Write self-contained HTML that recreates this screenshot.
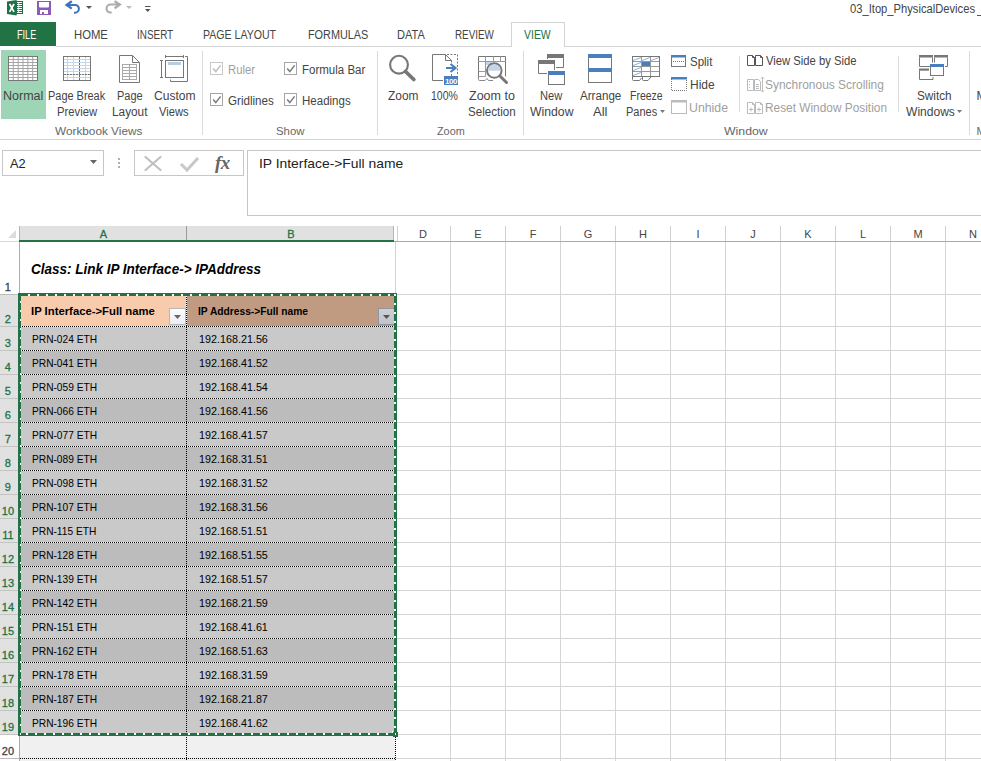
<!DOCTYPE html><html><head><meta charset="utf-8"><style>
*{margin:0;padding:0;box-sizing:border-box}
html,body{width:981px;height:761px;overflow:hidden;background:#fff}
body{position:relative;font-family:"Liberation Sans",sans-serif}
.a{position:absolute}
.t{position:absolute;white-space:nowrap;line-height:1}
svg{position:absolute;overflow:visible}
</style></head><body>
<svg style="left:7px;top:0px" width="17" height="17" viewBox="0 0 17 17">
<rect x="9.5" y="1.5" width="6" height="12" fill="#fff" stroke="#1f7246"/>
<path d="M10 3.5H15M10 5.5H15M10 7.5H15M10 9.5H15M10 11.5H15" stroke="#1f7246" stroke-width="1"/>
<path d="M11.7 2V13" stroke="#fff" stroke-width="0.8"/>
<path d="M0 1.5 L9.7 0 L9.7 15.5 L0 14 Z" fill="#1f7246"/>
<path d="M2.6 4 L7 11.8 M7 4 L2.6 11.8" stroke="#fff" stroke-width="1.7"/>
</svg>
<svg style="left:37px;top:1px" width="14" height="14" viewBox="0 0 14 14">
<rect x="0" y="0" width="14" height="14" fill="#8c5bb5"/>
<path d="M2 1H12V5.5Q12 6.6 11 6.6H3Q2 6.6 2 5.5Z" fill="#fff"/>
<rect x="3" y="9" width="8" height="4" fill="#fff"/>
<rect x="5" y="11" width="2" height="2" fill="#8c5bb5"/>
</svg>
<svg style="left:65px;top:0px" width="16" height="15" viewBox="0 0 16 15">
<path d="M6.8 1.2L1.6 4.9L6.8 8.6" fill="none" stroke="#3d74b8" stroke-width="2.3"/>
<path d="M2 4.9H10A3.9 3.9 0 0 1 10 12.7H9" fill="none" stroke="#3d74b8" stroke-width="2"/>
</svg>
<svg style="left:86px;top:6px" width="6" height="4" viewBox="0 0 6 4"><path d="M0 0H6L3 3Z" fill="#555"/></svg>
<svg style="left:105px;top:0px" width="16" height="15" viewBox="0 0 16 15">
<path d="M9.6 1.2L14.8 4.6L9.6 8.3" fill="none" stroke="#ababab" stroke-width="2.3"/>
<path d="M14.4 4.6H5.5A4 4 0 0 0 5.5 12.6H6.7" fill="none" stroke="#ababab" stroke-width="2"/>
</svg>
<svg style="left:126px;top:6px" width="6" height="4" viewBox="0 0 6 4"><path d="M0 0H6L3 3Z" fill="#bbb"/></svg>
<svg style="left:145px;top:5px" width="6" height="8" viewBox="0 0 6 8"><path d="M0 1.5H5.5" stroke="#555" stroke-width="1"/><path d="M0 4H5.5L2.75 7Z" fill="#555"/></svg>
<div class="t" style="left:850.00px;top:3.02px;font-size:12.5px;color:#444;transform:scaleX(0.8950);transform-origin:left 0;">03_Itop_PhysicalDevices</div>
<div class="a" style="left:977px;top:15px;width:4px;height:1px;background:#555"></div>
<div class="a" style="left:0px;top:22px;width:56px;height:24px;background:#217346"></div>
<div class="t" style="left:16.60px;top:28.84px;font-size:12px;color:#fff;transform:scaleX(0.7571);transform-origin:left 0;">FILE</div>
<div class="a" style="left:56px;top:46px;width:925px;height:1px;background:#d4d4d4"></div>
<div class="a" style="left:511px;top:22px;width:54px;height:25px;background:#fff;border:1px solid #d4d4d4;border-bottom:none"></div>
<div class="t" style="left:73.80px;top:28.84px;font-size:12px;color:#444;transform:scaleX(0.9420);transform-origin:left 0;">HOME</div>
<div class="t" style="left:137.00px;top:28.84px;font-size:12px;color:#444;transform:scaleX(0.8257);transform-origin:left 0;">INSERT</div>
<div class="t" style="left:203.40px;top:28.84px;font-size:12px;color:#444;transform:scaleX(0.8810);transform-origin:left 0;">PAGE LAYOUT</div>
<div class="t" style="left:307.80px;top:28.84px;font-size:12px;color:#444;transform:scaleX(0.9034);transform-origin:left 0;">FORMULAS</div>
<div class="t" style="left:397.00px;top:28.84px;font-size:12px;color:#444;transform:scaleX(0.9208);transform-origin:left 0;">DATA</div>
<div class="t" style="left:455.00px;top:28.84px;font-size:12px;color:#444;transform:scaleX(0.8193);transform-origin:left 0;">REVIEW</div>
<div class="t" style="left:524.00px;top:28.84px;font-size:12px;color:#217346;transform:scaleX(0.8710);transform-origin:left 0;">VIEW</div>
<div class="a" style="left:0px;top:139px;width:981px;height:1px;background:#d4d4d4"></div>
<div class="a" style="left:202px;top:51px;width:1px;height:84px;background:#dadada"></div>
<div class="a" style="left:377px;top:51px;width:1px;height:84px;background:#dadada"></div>
<div class="a" style="left:523px;top:51px;width:1px;height:84px;background:#dadada"></div>
<div class="a" style="left:969px;top:51px;width:1px;height:84px;background:#dadada"></div>
<div class="a" style="left:739px;top:56px;width:1px;height:56px;background:#dadada"></div>
<div class="a" style="left:898px;top:56px;width:1px;height:56px;background:#dadada"></div>
<div class="a" style="left:1px;top:50px;width:45px;height:69px;background:#9fd5b7"></div>
<div class="t" style="left:55.00px;top:125.69px;font-size:11px;color:#666;transform:scaleX(1.0715);transform-origin:left 0;">Workbook Views</div>
<div class="t" style="left:275.80px;top:125.69px;font-size:11px;color:#666;transform:scaleX(1.0343);transform-origin:left 0;">Show</div>
<div class="t" style="left:436.60px;top:125.69px;font-size:11px;color:#666;transform:scaleX(0.9853);transform-origin:left 0;">Zoom</div>
<div class="t" style="left:724.00px;top:125.69px;font-size:11px;color:#666;transform:scaleX(1.1163);transform-origin:left 0;">Window</div>
<div class="t" style="left:3.40px;top:89.54px;font-size:12px;color:#444;transform:scaleX(1.0434);transform-origin:left 0;">Normal</div>
<div class="t" style="left:48.00px;top:89.54px;font-size:12px;color:#444;transform:scaleX(0.9118);transform-origin:left 0;">Page Break</div>
<div class="t" style="left:57.20px;top:105.94px;font-size:12px;color:#444;transform:scaleX(0.9378);transform-origin:left 0;">Preview</div>
<div class="t" style="left:117.00px;top:89.54px;font-size:12px;color:#444;transform:scaleX(0.9147);transform-origin:left 0;">Page</div>
<div class="t" style="left:112.20px;top:105.94px;font-size:12px;color:#444;transform:scaleX(0.9843);transform-origin:left 0;">Layout</div>
<div class="t" style="left:153.80px;top:89.54px;font-size:12px;color:#444;transform:scaleX(1.0059);transform-origin:left 0;">Custom</div>
<div class="t" style="left:159.20px;top:105.94px;font-size:12px;color:#444;transform:scaleX(0.9292);transform-origin:left 0;">Views</div>
<div class="t" style="left:387.60px;top:89.54px;font-size:12px;color:#444;transform:scaleX(0.9914);transform-origin:left 0;">Zoom</div>
<div class="t" style="left:431.00px;top:89.54px;font-size:12px;color:#444;transform:scaleX(0.8752);transform-origin:left 0;">100%</div>
<div class="t" style="left:469.00px;top:89.54px;font-size:12px;color:#444;transform:scaleX(1.0413);transform-origin:left 0;">Zoom to</div>
<div class="t" style="left:468.00px;top:105.94px;font-size:12px;color:#444;transform:scaleX(0.9658);transform-origin:left 0;">Selection</div>
<div class="t" style="left:540.20px;top:89.54px;font-size:12px;color:#444;transform:scaleX(0.9232);transform-origin:left 0;">New</div>
<div class="t" style="left:530.00px;top:105.94px;font-size:12px;color:#444;transform:scaleX(1.0190);transform-origin:left 0;">Window</div>
<div class="t" style="left:579.80px;top:89.54px;font-size:12px;color:#444;transform:scaleX(0.9681);transform-origin:left 0;">Arrange</div>
<div class="t" style="left:592.80px;top:105.94px;font-size:12px;color:#444;transform:scaleX(1.0870);transform-origin:left 0;">All</div>
<div class="t" style="left:629.80px;top:89.54px;font-size:12px;color:#444;transform:scaleX(0.8738);transform-origin:left 0;">Freeze</div>
<div class="t" style="left:626.00px;top:105.94px;font-size:12px;color:#444;transform:scaleX(0.9152);transform-origin:left 0;">Panes</div>
<div class="t" style="left:916.60px;top:89.54px;font-size:12px;color:#444;transform:scaleX(0.9809);transform-origin:left 0;">Switch</div>
<div class="t" style="left:905.60px;top:105.94px;font-size:12px;color:#444;transform:scaleX(1.0044);transform-origin:left 0;">Windows</div>
<div class="t" style="left:690.00px;top:55.84px;font-size:12px;color:#444;transform:scaleX(0.9583);transform-origin:left 0;">Split</div>
<div class="t" style="left:690.00px;top:78.84px;font-size:12px;color:#444;">Hide</div>
<div class="t" style="left:689.00px;top:101.84px;font-size:12px;color:#a0a0a0;transform:scaleX(1.0270);transform-origin:left 0;">Unhide</div>
<div class="t" style="left:765.60px;top:55.34px;font-size:12px;color:#444;transform:scaleX(0.9372);transform-origin:left 0;">View Side by Side</div>
<div class="t" style="left:765.00px;top:78.84px;font-size:12px;color:#a0a0a0;transform:scaleX(0.9959);transform-origin:left 0;">Synchronous Scrolling</div>
<div class="t" style="left:765.00px;top:101.84px;font-size:12px;color:#a0a0a0;transform:scaleX(0.9886);transform-origin:left 0;">Reset Window Position</div>
<div class="t" style="left:976.50px;top:89.54px;font-size:12px;color:#444;">M</div>
<div class="t" style="left:976.50px;top:125.69px;font-size:11px;color:#666;">M</div>
<svg style="left:210px;top:62px" width="13" height="13" viewBox="0 0 13 13"><rect x="0.5" y="0.5" width="12" height="12" fill="#fff" stroke="#c8c8c8"/><path d="M3.2 6.6 L5.8 9.6 L10.6 3.4" fill="none" stroke="#bdbdbd" stroke-width="1.5"/></svg>
<svg style="left:284px;top:62px" width="13" height="13" viewBox="0 0 13 13"><rect x="0.5" y="0.5" width="12" height="12" fill="#fff" stroke="#a6a6a6"/><path d="M3.2 6.6 L5.8 9.6 L10.6 3.4" fill="none" stroke="#7a7a7a" stroke-width="1.5"/></svg>
<svg style="left:210px;top:93px" width="13" height="13" viewBox="0 0 13 13"><rect x="0.5" y="0.5" width="12" height="12" fill="#fff" stroke="#a6a6a6"/><path d="M3.2 6.6 L5.8 9.6 L10.6 3.4" fill="none" stroke="#7a7a7a" stroke-width="1.5"/></svg>
<svg style="left:284px;top:93px" width="13" height="13" viewBox="0 0 13 13"><rect x="0.5" y="0.5" width="12" height="12" fill="#fff" stroke="#a6a6a6"/><path d="M3.2 6.6 L5.8 9.6 L10.6 3.4" fill="none" stroke="#7a7a7a" stroke-width="1.5"/></svg>
<div class="t" style="left:227.60px;top:63.54px;font-size:12px;color:#a0a0a0;transform:scaleX(0.9407);transform-origin:left 0;">Ruler</div>
<div class="t" style="left:302.00px;top:63.54px;font-size:12px;color:#444;transform:scaleX(0.9593);transform-origin:left 0;">Formula Bar</div>
<div class="t" style="left:228.00px;top:94.54px;font-size:12px;color:#444;transform:scaleX(0.9665);transform-origin:left 0;">Gridlines</div>
<div class="t" style="left:302.00px;top:94.54px;font-size:12px;color:#444;transform:scaleX(0.9604);transform-origin:left 0;">Headings</div>
<svg style="left:8px;top:56px" width="30" height="25" viewBox="0 0 30 25"><rect x="0.5" y="0.5" width="29" height="24" fill="#fff" stroke="#777"/><path d="M1 3.5H29" stroke="#a6a6a6"/><path d="M1 6.5H29" stroke="#a6a6a6"/><path d="M1 9.5H29" stroke="#a6a6a6"/><path d="M1 12.5H29" stroke="#a6a6a6"/><path d="M1 15.5H29" stroke="#a6a6a6"/><path d="M1 18.5H29" stroke="#a6a6a6"/><path d="M1 21.5H29" stroke="#a6a6a6"/><path d="M5.3 1V24" stroke="#a6a6a6"/><path d="M10.2 1V24" stroke="#a6a6a6"/><path d="M15.0 1V24" stroke="#a6a6a6"/><path d="M19.8 1V24" stroke="#a6a6a6"/><path d="M24.7 1V24" stroke="#a6a6a6"/></svg>
<svg style="left:63px;top:56px" width="28" height="25" viewBox="0 0 28 25"><rect x="0.5" y="0.5" width="27" height="24" fill="#fff" stroke="#777"/><path d="M1 3.5H27" stroke="#c5d5ea"/><path d="M1 6.5H27" stroke="#c5d5ea"/><path d="M1 9.5H27" stroke="#c5d5ea"/><path d="M1 12.5H27" stroke="#c5d5ea"/><path d="M1 15.5H27" stroke="#c5d5ea"/><path d="M1 18.5H27" stroke="#c5d5ea"/><path d="M1 21.5H27" stroke="#c5d5ea"/><path d="M4.5 1V24" stroke="#c5d5ea"/><path d="M10.5 1V24" stroke="#c5d5ea"/><path d="M22.5 1V24" stroke="#c5d5ea"/><path d="M16.5 1V24" stroke="#666" stroke-dasharray="2,1"/><path d="M1 18.5H27" stroke="#777" stroke-dasharray="2,1"/></svg>
<svg style="left:119px;top:55px" width="22" height="29" viewBox="0 0 22 29">
<path d="M0.5 27.5V0.5H13.5L20.5 7.5V27.5Z" fill="#fff" stroke="#777"/>
<path d="M13.5 0.5V7.5H20.5" fill="none" stroke="#777"/>
<rect x="3.5" y="9.5" width="14" height="15" fill="#fff" stroke="#aaa"/>
<path d="M3.5 12.5H17.5M3.5 15.5H17.5M3.5 18.5H17.5M3.5 21.5H17.5M10.5 9.5V24.5" stroke="#aaa"/>
</svg>
<svg style="left:159px;top:54px" width="30" height="29" viewBox="0 0 30 29">
<path d="M2.5 6.5V23.5M1 6.5H4M1 23.5H4" fill="none" stroke="#777"/>
<path d="M6.5 2.5H24.5M6.5 1V4M24.5 1V4" fill="none" stroke="#777"/>
<rect x="6.5" y="6.5" width="18" height="17" fill="#fff" stroke="#777"/>
<rect x="9" y="8" width="13" height="3" fill="#b7cce6"/>
<path d="M26 2.5H28.5V27.5H11.5V25.5" fill="none" stroke="#777"/>
</svg>
<svg style="left:388px;top:54px" width="30" height="30" viewBox="0 0 30 30">
<circle cx="11" cy="10.7" r="8.9" fill="none" stroke="#777" stroke-width="2.1"/>
<path d="M17.5 17.5 L25.8 25.5" stroke="#777" stroke-width="3.8" stroke-linecap="round"/>
</svg>
<svg style="left:432px;top:54px" width="27" height="31" viewBox="0 0 27 31">
<path d="M11 26.5H0.5V0.5H13.5L19.5 6.5V8.5" fill="none" stroke="#777"/>
<path d="M13.5 0.5V6.5H19.5" fill="none" stroke="#777"/>
<path d="M15 0.5H25.5V20.5" fill="none" stroke="#777" stroke-dasharray="2,1.5"/>
<path d="M19.5 20V22" stroke="#777"/>
<path d="M14 14H23" stroke="#4a7fbd" stroke-width="2"/>
<path d="M18.5 10L23.5 14L18.5 18" fill="none" stroke="#4a7fbd" stroke-width="2.2"/>
<rect x="12" y="22" width="14" height="9" fill="#4a7fbd"/>
<text x="19" y="29.5" font-family="Liberation Sans" font-size="8" font-weight="bold" fill="#fff" text-anchor="middle" letter-spacing="-0.5">100</text>
</svg>
<svg style="left:477px;top:56px" width="32" height="29" viewBox="0 0 32 29">
<path d="M1.5 20.5V0.5H28.5V20.5" fill="#fff" stroke="#777"/>
<path d="M1.5 5.5H28.5M8.5 0.5V20.5M16.5 0.5V5.5M23.5 0.5V5.5M1.5 15.5H8.5M1.5 20.5H8.5" fill="none" stroke="#9a9a9a"/>
<path d="M1.5 20.5V23.5Q1.5 24.5 2.5 24.5H8L10 22.5L11.5 24.5H16" fill="none" stroke="#888"/>
<rect x="9" y="6" width="5" height="3" fill="#c3d5ea"/>
<circle cx="17.3" cy="14.5" r="7.3" fill="#fff" stroke="#777" stroke-width="2"/>
<path d="M11 14.8 A6.3 6.3 0 0 1 23.6 14.8Z" fill="#c3d5ea"/>
<path d="M23.2 20.2L29.5 26.5" stroke="#777" stroke-width="3" stroke-linecap="round"/>
</svg>
<svg style="left:538px;top:54px" width="28" height="32" viewBox="0 0 28 32">
<rect x="9" y="0" width="17" height="4" fill="#777"/>
<path d="M9.5 4V5M25.5 4V13.5H18" fill="none" stroke="#777"/>
<rect x="0" y="6" width="17" height="4" fill="#777"/>
<path d="M0.5 10V19.5H9M16.5 10V16" fill="none" stroke="#777"/>
<rect x="10.5" y="17.5" width="16" height="13" fill="#fff" stroke="#777"/>
<rect x="10" y="17" width="17" height="4" fill="#4a7fbd"/>
</svg>
<svg style="left:588px;top:54px" width="24" height="30" viewBox="0 0 24 30">
<rect x="0.5" y="0.5" width="23" height="28" fill="#fff" stroke="#777"/>
<rect x="0" y="0" width="24" height="4" fill="#4a7fbd"/>
<rect x="0" y="14" width="24" height="4" fill="#4a7fbd"/>
</svg>
<svg style="left:632px;top:56px" width="29" height="26" viewBox="0 0 29 26">
<rect x="0.5" y="0.5" width="27" height="20" fill="#fff" stroke="#777"/>
<path d="M1 5.5H27M1 10.5H27M1 15.5H27M9.5 1V20M18.5 1V20" stroke="#999"/>
<path d="M1 4.5L9 1.5M10 4.5L18 1.5M19 4.5L27 1.5M1 9.5L9 6.5M1 14.5L9 11.5M1 19.5L9 16.5" stroke="#8db0dc"/>
<rect x="10" y="6" width="8" height="4" fill="#4a7fbd"/>
<path d="M0.5 20.5V23.5Q0.5 24.5 1.5 24.5H7.5L9.5 22M10.5 21V23.5Q10.5 24.5 11.5 24.5H16L19 21" fill="none" stroke="#777"/>
</svg>
<svg style="left:671px;top:55px" width="15" height="12" viewBox="0 0 15 12">
<rect x="0.5" y="0.5" width="14" height="11" fill="#fff" stroke="#777"/>
<rect x="0" y="0" width="15" height="2.5" fill="#4a7fbd"/>
<path d="M2 6.5H13" stroke="#4a7fbd" stroke-dasharray="1,1"/>
</svg>
<svg style="left:671px;top:77px" width="16" height="14" viewBox="0 0 16 14">
<path d="M0.5 2V13.5H15.5V2" fill="#fff" stroke="#777" stroke-dasharray="1,1"/>
<rect x="0" y="0" width="16" height="2.5" fill="#4a7fbd"/>
</svg>
<svg style="left:671px;top:100px" width="16" height="14" viewBox="0 0 16 14">
<rect x="0.5" y="0.5" width="15" height="13" fill="#fff" stroke="#bbb"/>
<rect x="0" y="0" width="16" height="2.5" fill="#bbb"/>
</svg>
<svg style="left:747px;top:55px" width="17" height="12" viewBox="0 0 17 12">
<path d="M0.5 10.5V0.5H5.5L7.5 2.5V10.5ZM8.5 10.5V0.5H13.5L15.5 2.5V10.5Z" fill="#fff" stroke="#555"/>
<path d="M5.5 0.5V2.5H7.5M13.5 0.5V2.5H15.5" fill="none" stroke="#555"/>
</svg>
<svg style="left:747px;top:76px" width="17" height="17" viewBox="0 0 17 17">
<path d="M0.5 3.5H6.5V14.5H0.5Z" fill="#fff" stroke="#bbb"/>
<path d="M2.5 5V6M2.5 8V9M2.5 11V12" stroke="#bbb"/>
<path d="M7.5 14.5V3.5H11.5L13.5 5.5V14.5Z" fill="#fff" stroke="#bbb"/>
<path d="M9 8.5H12M9 10.5H12M9 12.5H12" stroke="#bbb"/>
<path d="M15.5 1V16M14 2.5L15.5 1L17 2.5M14 14.5L15.5 16L17 14.5" fill="none" stroke="#bbb"/>
</svg>
<svg style="left:747px;top:102px" width="17" height="12" viewBox="0 0 17 12">
<path d="M0.5 11.5V0.5H5.5L7.5 2.5V11.5ZM8.5 11.5V0.5H13.5L15.5 2.5V11.5Z" fill="#fff" stroke="#bbb"/>
<path d="M5.5 0.5V2.5H7.5M13.5 0.5V2.5H15.5" fill="none" stroke="#bbb"/>
<path d="M2 7.5H6M4 5.5V9.5M10 7.5H14M12 5.5V9.5" stroke="#bbb"/>
</svg>
<svg style="left:919px;top:55px" width="30" height="26" viewBox="0 0 30 26">
<rect x="0" y="0" width="14" height="2.5" fill="#777"/>
<rect x="15" y="0" width="14" height="2.5" fill="#777"/>
<rect x="0" y="13.5" width="10" height="2.2" fill="#777"/>
<path d="M0.5 2.5V11.5H11M13.5 2.5V7.5M15.5 2.5V7.5M28.5 2.5V11.5H26M0.5 15.5V24.5H14V22" fill="none" stroke="#777"/>
<rect x="11.5" y="9.5" width="13" height="11" fill="#fff" stroke="#777"/>
<rect x="11" y="9" width="14" height="3" fill="#4a7fbd"/>
</svg>
<svg style="left:660px;top:110px" width="5" height="3" viewBox="0 0 5 3"><path d="M0 0H5L2.5 3Z" fill="#777"/></svg>
<svg style="left:957px;top:110px" width="5" height="3" viewBox="0 0 5 3"><path d="M0 0H5L2.5 3Z" fill="#777"/></svg>
<div class="a" style="left:2px;top:150px;width:102px;height:26px;border:1px solid #c6c6c6;background:#fff"></div>
<div class="t" style="left:9.60px;top:157.00px;font-size:13px;color:#222;transform:scaleX(0.9855);transform-origin:left 0;">A2</div>
<svg style="left:90px;top:160px" width="7" height="4" viewBox="0 0 7 4"><path d="M0 0H7L3.5 4Z" fill="#666"/></svg>
<div class="a" style="left:118px;top:158px;width:2px;height:2px;background:#b0b0b0"></div>
<div class="a" style="left:118px;top:162px;width:2px;height:2px;background:#b0b0b0"></div>
<div class="a" style="left:118px;top:166px;width:2px;height:2px;background:#b0b0b0"></div>
<div class="a" style="left:134px;top:150px;width:110px;height:26px;border:1px solid #c6c6c6;background:#fff"></div>
<svg style="left:144px;top:156px" width="18" height="15" viewBox="0 0 18 15">
<path d="M1.5 1L16.5 14M16.5 1L1.5 14" stroke="#c0c0c0" stroke-width="2.2" stroke-linecap="round"/></svg>
<svg style="left:180px;top:156px" width="19" height="15" viewBox="0 0 19 15">
<path d="M1 8L7 14L18 2" fill="none" stroke="#c8c8c8" stroke-width="3"/></svg>
<div class="t" style="left:215.00px;top:152.92px;font-size:19px;color:#666;font-family:'Liberation Serif',serif;font-style:italic;font-weight:bold;letter-spacing:-0.5px;">fx</div>
<div class="a" style="left:247px;top:150px;width:740px;height:66px;border:1px solid #c6c6c6;background:#fff"></div>
<div class="t" style="left:258.60px;top:156.80px;font-size:13px;color:#222;transform:scaleX(1.0664);transform-origin:left 0;">IP Interface-&gt;Full name</div>
<div class="a" style="left:0px;top:226px;width:981px;height:16px;background:#fff"></div>
<svg style="left:8px;top:230px" width="8" height="8" viewBox="0 0 8 8"><path d="M8 0V8H0Z" fill="#dcdcdc"/></svg>
<div class="a" style="left:0px;top:241px;width:19px;height:1px;background:#dadada"></div>
<div class="a" style="left:19px;top:226px;width:375px;height:14px;background:#e1e1e1"></div>
<div class="a" style="left:19px;top:240px;width:375px;height:2px;background:#217346"></div>
<div class="a" style="left:186px;top:226px;width:1px;height:14px;background:#9a9a9a"></div>
<div class="a" style="left:19px;top:226px;width:1px;height:14px;background:#b4b4b4"></div>
<div class="a" style="left:393px;top:226px;width:1px;height:14px;background:#b5b5b5"></div>
<div class="a" style="left:397px;top:226px;width:1px;height:15px;background:#d0d0d0"></div>
<div class="a" style="left:394px;top:241px;width:587px;height:1px;background:#ababab"></div>
<div class="t" style="left:-46.5px;width:300px;text-align:center;top:228.69px;font-size:11px;color:#217346;-webkit-text-stroke:0.3px;">A</div>
<div class="t" style="left:141px;width:300px;text-align:center;top:228.69px;font-size:11px;color:#217346;-webkit-text-stroke:0.3px;">B</div>
<div class="t" style="left:273px;width:300px;text-align:center;top:228.69px;font-size:11px;color:#444;">D</div>
<div class="a" style="left:450px;top:226px;width:1px;height:15px;background:#d0d0d0"></div>
<div class="t" style="left:328px;width:300px;text-align:center;top:228.69px;font-size:11px;color:#444;">E</div>
<div class="a" style="left:505px;top:226px;width:1px;height:15px;background:#d0d0d0"></div>
<div class="t" style="left:383px;width:300px;text-align:center;top:228.69px;font-size:11px;color:#444;">F</div>
<div class="a" style="left:560px;top:226px;width:1px;height:15px;background:#d0d0d0"></div>
<div class="t" style="left:438px;width:300px;text-align:center;top:228.69px;font-size:11px;color:#444;">G</div>
<div class="a" style="left:615px;top:226px;width:1px;height:15px;background:#d0d0d0"></div>
<div class="t" style="left:493px;width:300px;text-align:center;top:228.69px;font-size:11px;color:#444;">H</div>
<div class="a" style="left:670px;top:226px;width:1px;height:15px;background:#d0d0d0"></div>
<div class="t" style="left:548px;width:300px;text-align:center;top:228.69px;font-size:11px;color:#444;">I</div>
<div class="a" style="left:725px;top:226px;width:1px;height:15px;background:#d0d0d0"></div>
<div class="t" style="left:603px;width:300px;text-align:center;top:228.69px;font-size:11px;color:#444;">J</div>
<div class="a" style="left:780px;top:226px;width:1px;height:15px;background:#d0d0d0"></div>
<div class="t" style="left:658px;width:300px;text-align:center;top:228.69px;font-size:11px;color:#444;">K</div>
<div class="a" style="left:835px;top:226px;width:1px;height:15px;background:#d0d0d0"></div>
<div class="t" style="left:713px;width:300px;text-align:center;top:228.69px;font-size:11px;color:#444;">L</div>
<div class="a" style="left:890px;top:226px;width:1px;height:15px;background:#d0d0d0"></div>
<div class="t" style="left:768px;width:300px;text-align:center;top:228.69px;font-size:11px;color:#444;">M</div>
<div class="a" style="left:945px;top:226px;width:1px;height:15px;background:#d0d0d0"></div>
<div class="t" style="left:823px;width:300px;text-align:center;top:228.69px;font-size:11px;color:#444;">N</div>
<div class="a" style="left:19px;top:242px;width:1px;height:519px;background:#ababab"></div>
<div class="a" style="left:450px;top:242px;width:1px;height:519px;background:#d4d4d4"></div>
<div class="a" style="left:505px;top:242px;width:1px;height:519px;background:#d4d4d4"></div>
<div class="a" style="left:560px;top:242px;width:1px;height:519px;background:#d4d4d4"></div>
<div class="a" style="left:615px;top:242px;width:1px;height:519px;background:#d4d4d4"></div>
<div class="a" style="left:670px;top:242px;width:1px;height:519px;background:#d4d4d4"></div>
<div class="a" style="left:725px;top:242px;width:1px;height:519px;background:#d4d4d4"></div>
<div class="a" style="left:780px;top:242px;width:1px;height:519px;background:#d4d4d4"></div>
<div class="a" style="left:835px;top:242px;width:1px;height:519px;background:#d4d4d4"></div>
<div class="a" style="left:890px;top:242px;width:1px;height:519px;background:#d4d4d4"></div>
<div class="a" style="left:945px;top:242px;width:1px;height:519px;background:#d4d4d4"></div>
<div class="a" style="left:1000px;top:242px;width:1px;height:519px;background:#d4d4d4"></div>
<div class="a" style="left:395px;top:242px;width:1px;height:52px;background:#d4d4d4"></div>
<div class="a" style="left:396px;top:294px;width:585px;height:1px;background:#d4d4d4"></div>
<div class="a" style="left:396px;top:326px;width:585px;height:1px;background:#d4d4d4"></div>
<div class="a" style="left:396px;top:350px;width:585px;height:1px;background:#d4d4d4"></div>
<div class="a" style="left:396px;top:374px;width:585px;height:1px;background:#d4d4d4"></div>
<div class="a" style="left:396px;top:398px;width:585px;height:1px;background:#d4d4d4"></div>
<div class="a" style="left:396px;top:422px;width:585px;height:1px;background:#d4d4d4"></div>
<div class="a" style="left:396px;top:446px;width:585px;height:1px;background:#d4d4d4"></div>
<div class="a" style="left:396px;top:470px;width:585px;height:1px;background:#d4d4d4"></div>
<div class="a" style="left:396px;top:494px;width:585px;height:1px;background:#d4d4d4"></div>
<div class="a" style="left:396px;top:518px;width:585px;height:1px;background:#d4d4d4"></div>
<div class="a" style="left:396px;top:542px;width:585px;height:1px;background:#d4d4d4"></div>
<div class="a" style="left:396px;top:566px;width:585px;height:1px;background:#d4d4d4"></div>
<div class="a" style="left:396px;top:590px;width:585px;height:1px;background:#d4d4d4"></div>
<div class="a" style="left:396px;top:614px;width:585px;height:1px;background:#d4d4d4"></div>
<div class="a" style="left:396px;top:638px;width:585px;height:1px;background:#d4d4d4"></div>
<div class="a" style="left:396px;top:662px;width:585px;height:1px;background:#d4d4d4"></div>
<div class="a" style="left:396px;top:686px;width:585px;height:1px;background:#d4d4d4"></div>
<div class="a" style="left:396px;top:710px;width:585px;height:1px;background:#d4d4d4"></div>
<div class="a" style="left:396px;top:734px;width:585px;height:1px;background:#d4d4d4"></div>
<div class="a" style="left:396px;top:758px;width:585px;height:1px;background:#d4d4d4"></div>
<div class="a" style="left:396px;top:782px;width:585px;height:1px;background:#d4d4d4"></div>
<div class="a" style="left:0px;top:294px;width:19px;height:1px;background:#bdbdbd"></div>
<div class="t" style="left:-142.1px;width:300px;text-align:center;top:282.09px;font-size:11px;color:#444;-webkit-text-stroke:0.3px;">1</div>
<div class="a" style="left:0px;top:295px;width:19px;height:31px;background:#e1e1e1"></div>
<div class="a" style="left:0px;top:326px;width:19px;height:1px;background:#c4c4c4"></div>
<div class="t" style="left:-142.1px;width:300px;text-align:center;top:314.09px;font-size:11px;color:#217346;-webkit-text-stroke:0.3px;">2</div>
<div class="a" style="left:0px;top:327px;width:19px;height:23px;background:#e1e1e1"></div>
<div class="a" style="left:0px;top:350px;width:19px;height:1px;background:#c4c4c4"></div>
<div class="t" style="left:-142.1px;width:300px;text-align:center;top:338.09px;font-size:11px;color:#217346;-webkit-text-stroke:0.3px;">3</div>
<div class="a" style="left:0px;top:351px;width:19px;height:23px;background:#e1e1e1"></div>
<div class="a" style="left:0px;top:374px;width:19px;height:1px;background:#c4c4c4"></div>
<div class="t" style="left:-142.1px;width:300px;text-align:center;top:362.09px;font-size:11px;color:#217346;-webkit-text-stroke:0.3px;">4</div>
<div class="a" style="left:0px;top:375px;width:19px;height:23px;background:#e1e1e1"></div>
<div class="a" style="left:0px;top:398px;width:19px;height:1px;background:#c4c4c4"></div>
<div class="t" style="left:-142.1px;width:300px;text-align:center;top:386.09px;font-size:11px;color:#217346;-webkit-text-stroke:0.3px;">5</div>
<div class="a" style="left:0px;top:399px;width:19px;height:23px;background:#e1e1e1"></div>
<div class="a" style="left:0px;top:422px;width:19px;height:1px;background:#c4c4c4"></div>
<div class="t" style="left:-142.1px;width:300px;text-align:center;top:410.09px;font-size:11px;color:#217346;-webkit-text-stroke:0.3px;">6</div>
<div class="a" style="left:0px;top:423px;width:19px;height:23px;background:#e1e1e1"></div>
<div class="a" style="left:0px;top:446px;width:19px;height:1px;background:#c4c4c4"></div>
<div class="t" style="left:-142.1px;width:300px;text-align:center;top:434.09px;font-size:11px;color:#217346;-webkit-text-stroke:0.3px;">7</div>
<div class="a" style="left:0px;top:447px;width:19px;height:23px;background:#e1e1e1"></div>
<div class="a" style="left:0px;top:470px;width:19px;height:1px;background:#c4c4c4"></div>
<div class="t" style="left:-142.1px;width:300px;text-align:center;top:458.09px;font-size:11px;color:#217346;-webkit-text-stroke:0.3px;">8</div>
<div class="a" style="left:0px;top:471px;width:19px;height:23px;background:#e1e1e1"></div>
<div class="a" style="left:0px;top:494px;width:19px;height:1px;background:#c4c4c4"></div>
<div class="t" style="left:-142.1px;width:300px;text-align:center;top:482.09px;font-size:11px;color:#217346;-webkit-text-stroke:0.3px;">9</div>
<div class="a" style="left:0px;top:495px;width:19px;height:23px;background:#e1e1e1"></div>
<div class="a" style="left:0px;top:518px;width:19px;height:1px;background:#c4c4c4"></div>
<div class="t" style="left:-142.1px;width:300px;text-align:center;top:506.09px;font-size:11px;color:#217346;-webkit-text-stroke:0.3px;">10</div>
<div class="a" style="left:0px;top:519px;width:19px;height:23px;background:#e1e1e1"></div>
<div class="a" style="left:0px;top:542px;width:19px;height:1px;background:#c4c4c4"></div>
<div class="t" style="left:-142.1px;width:300px;text-align:center;top:530.09px;font-size:11px;color:#217346;-webkit-text-stroke:0.3px;">11</div>
<div class="a" style="left:0px;top:543px;width:19px;height:23px;background:#e1e1e1"></div>
<div class="a" style="left:0px;top:566px;width:19px;height:1px;background:#c4c4c4"></div>
<div class="t" style="left:-142.1px;width:300px;text-align:center;top:554.09px;font-size:11px;color:#217346;-webkit-text-stroke:0.3px;">12</div>
<div class="a" style="left:0px;top:567px;width:19px;height:23px;background:#e1e1e1"></div>
<div class="a" style="left:0px;top:590px;width:19px;height:1px;background:#c4c4c4"></div>
<div class="t" style="left:-142.1px;width:300px;text-align:center;top:578.09px;font-size:11px;color:#217346;-webkit-text-stroke:0.3px;">13</div>
<div class="a" style="left:0px;top:591px;width:19px;height:23px;background:#e1e1e1"></div>
<div class="a" style="left:0px;top:614px;width:19px;height:1px;background:#c4c4c4"></div>
<div class="t" style="left:-142.1px;width:300px;text-align:center;top:602.09px;font-size:11px;color:#217346;-webkit-text-stroke:0.3px;">14</div>
<div class="a" style="left:0px;top:615px;width:19px;height:23px;background:#e1e1e1"></div>
<div class="a" style="left:0px;top:638px;width:19px;height:1px;background:#c4c4c4"></div>
<div class="t" style="left:-142.1px;width:300px;text-align:center;top:626.09px;font-size:11px;color:#217346;-webkit-text-stroke:0.3px;">15</div>
<div class="a" style="left:0px;top:639px;width:19px;height:23px;background:#e1e1e1"></div>
<div class="a" style="left:0px;top:662px;width:19px;height:1px;background:#c4c4c4"></div>
<div class="t" style="left:-142.1px;width:300px;text-align:center;top:650.09px;font-size:11px;color:#217346;-webkit-text-stroke:0.3px;">16</div>
<div class="a" style="left:0px;top:663px;width:19px;height:23px;background:#e1e1e1"></div>
<div class="a" style="left:0px;top:686px;width:19px;height:1px;background:#c4c4c4"></div>
<div class="t" style="left:-142.1px;width:300px;text-align:center;top:674.09px;font-size:11px;color:#217346;-webkit-text-stroke:0.3px;">17</div>
<div class="a" style="left:0px;top:687px;width:19px;height:23px;background:#e1e1e1"></div>
<div class="a" style="left:0px;top:710px;width:19px;height:1px;background:#c4c4c4"></div>
<div class="t" style="left:-142.1px;width:300px;text-align:center;top:698.09px;font-size:11px;color:#217346;-webkit-text-stroke:0.3px;">18</div>
<div class="a" style="left:0px;top:711px;width:19px;height:23px;background:#e1e1e1"></div>
<div class="a" style="left:0px;top:734px;width:19px;height:1px;background:#c4c4c4"></div>
<div class="t" style="left:-142.1px;width:300px;text-align:center;top:722.09px;font-size:11px;color:#217346;-webkit-text-stroke:0.3px;">19</div>
<div class="a" style="left:0px;top:758px;width:19px;height:1px;background:#bdbdbd"></div>
<div class="t" style="left:-142.1px;width:300px;text-align:center;top:746.09px;font-size:11px;color:#444;-webkit-text-stroke:0.3px;">20</div>
<div class="t" style="left:31.20px;top:261.73px;font-size:14.5px;color:#000;font-weight:bold;font-style:italic;transform:scaleX(0.9316);transform-origin:left 0;">Class: Link IP Interface-&gt; IPAddress</div>
<div class="a" style="left:20px;top:295px;width:166px;height:31px;background:#f8cbad"></div>
<div class="a" style="left:187px;top:295px;width:208px;height:31px;background:#c09b81"></div>
<div class="t" style="left:31.00px;top:306.19px;font-size:11px;color:#000;font-weight:bold;transform:scaleX(1.0276);transform-origin:left 0;">IP Interface-&gt;Full name</div>
<div class="t" style="left:198.00px;top:306.19px;font-size:11px;color:#000;font-weight:bold;transform:scaleX(0.9297);transform-origin:left 0;">IP Address-&gt;Full name</div>
<div class="a" style="left:169px;top:308px;width:17px;height:17px;background:linear-gradient(#fdfdfd,#eceef2);border:1px solid #b4b8bf"></div>
<svg style="left:174px;top:315px" width="7" height="4" viewBox="0 0 7 4"><path d="M0 0H7L3.5 4Z" fill="#666"/></svg>
<div class="a" style="left:378px;top:308px;width:17px;height:17px;background:linear-gradient(#cfd0d3,#c3c4c8);border:1px solid #8e96a0"></div>
<svg style="left:383px;top:315px" width="7" height="4" viewBox="0 0 7 4"><path d="M0 0H7L3.5 4Z" fill="#555"/></svg>
<div class="a" style="left:20px;top:327px;width:375px;height:23px;background:#c9c9c9"></div>
<div class="t" style="left:31.80px;top:334.19px;font-size:11px;color:#000;transform:scaleX(0.9251);transform-origin:left 0;">PRN-024 ETH</div>
<div class="t" style="left:198.60px;top:334.19px;font-size:11px;color:#000;transform:scaleX(0.9788);transform-origin:left 0;">192.168.21.56</div>
<div class="a" style="left:20px;top:351px;width:375px;height:23px;background:#bcbcbc"></div>
<div class="t" style="left:31.80px;top:358.19px;font-size:11px;color:#000;transform:scaleX(0.9251);transform-origin:left 0;">PRN-041 ETH</div>
<div class="t" style="left:198.60px;top:358.19px;font-size:11px;color:#000;transform:scaleX(0.9788);transform-origin:left 0;">192.168.41.52</div>
<div class="a" style="left:20px;top:375px;width:375px;height:23px;background:#c9c9c9"></div>
<div class="t" style="left:31.80px;top:382.19px;font-size:11px;color:#000;transform:scaleX(0.9251);transform-origin:left 0;">PRN-059 ETH</div>
<div class="t" style="left:198.60px;top:382.19px;font-size:11px;color:#000;transform:scaleX(0.9788);transform-origin:left 0;">192.168.41.54</div>
<div class="a" style="left:20px;top:399px;width:375px;height:23px;background:#bcbcbc"></div>
<div class="t" style="left:31.80px;top:406.19px;font-size:11px;color:#000;transform:scaleX(0.9251);transform-origin:left 0;">PRN-066 ETH</div>
<div class="t" style="left:198.60px;top:406.19px;font-size:11px;color:#000;transform:scaleX(0.9788);transform-origin:left 0;">192.168.41.56</div>
<div class="a" style="left:20px;top:423px;width:375px;height:23px;background:#c9c9c9"></div>
<div class="t" style="left:31.80px;top:430.19px;font-size:11px;color:#000;transform:scaleX(0.9251);transform-origin:left 0;">PRN-077 ETH</div>
<div class="t" style="left:198.60px;top:430.19px;font-size:11px;color:#000;transform:scaleX(0.9788);transform-origin:left 0;">192.168.41.57</div>
<div class="a" style="left:20px;top:447px;width:375px;height:23px;background:#bcbcbc"></div>
<div class="t" style="left:31.80px;top:454.19px;font-size:11px;color:#000;transform:scaleX(0.9251);transform-origin:left 0;">PRN-089 ETH</div>
<div class="t" style="left:198.60px;top:454.19px;font-size:11px;color:#000;transform:scaleX(0.9788);transform-origin:left 0;">192.168.31.51</div>
<div class="a" style="left:20px;top:471px;width:375px;height:23px;background:#c9c9c9"></div>
<div class="t" style="left:31.80px;top:478.19px;font-size:11px;color:#000;transform:scaleX(0.9251);transform-origin:left 0;">PRN-098 ETH</div>
<div class="t" style="left:198.60px;top:478.19px;font-size:11px;color:#000;transform:scaleX(0.9788);transform-origin:left 0;">192.168.31.52</div>
<div class="a" style="left:20px;top:495px;width:375px;height:23px;background:#bcbcbc"></div>
<div class="t" style="left:31.80px;top:502.19px;font-size:11px;color:#000;transform:scaleX(0.9251);transform-origin:left 0;">PRN-107 ETH</div>
<div class="t" style="left:198.60px;top:502.19px;font-size:11px;color:#000;transform:scaleX(0.9788);transform-origin:left 0;">192.168.31.56</div>
<div class="a" style="left:20px;top:519px;width:375px;height:23px;background:#c9c9c9"></div>
<div class="t" style="left:31.80px;top:526.19px;font-size:11px;color:#000;transform:scaleX(0.9251);transform-origin:left 0;">PRN-115 ETH</div>
<div class="t" style="left:198.60px;top:526.19px;font-size:11px;color:#000;transform:scaleX(0.9788);transform-origin:left 0;">192.168.51.51</div>
<div class="a" style="left:20px;top:543px;width:375px;height:23px;background:#bcbcbc"></div>
<div class="t" style="left:31.80px;top:550.19px;font-size:11px;color:#000;transform:scaleX(0.9251);transform-origin:left 0;">PRN-128 ETH</div>
<div class="t" style="left:198.60px;top:550.19px;font-size:11px;color:#000;transform:scaleX(0.9788);transform-origin:left 0;">192.168.51.55</div>
<div class="a" style="left:20px;top:567px;width:375px;height:23px;background:#c9c9c9"></div>
<div class="t" style="left:31.80px;top:574.19px;font-size:11px;color:#000;transform:scaleX(0.9251);transform-origin:left 0;">PRN-139 ETH</div>
<div class="t" style="left:198.60px;top:574.19px;font-size:11px;color:#000;transform:scaleX(0.9788);transform-origin:left 0;">192.168.51.57</div>
<div class="a" style="left:20px;top:591px;width:375px;height:23px;background:#bcbcbc"></div>
<div class="t" style="left:31.80px;top:598.19px;font-size:11px;color:#000;transform:scaleX(0.9251);transform-origin:left 0;">PRN-142 ETH</div>
<div class="t" style="left:198.60px;top:598.19px;font-size:11px;color:#000;transform:scaleX(0.9788);transform-origin:left 0;">192.168.21.59</div>
<div class="a" style="left:20px;top:615px;width:375px;height:23px;background:#c9c9c9"></div>
<div class="t" style="left:31.80px;top:622.19px;font-size:11px;color:#000;transform:scaleX(0.9251);transform-origin:left 0;">PRN-151 ETH</div>
<div class="t" style="left:198.60px;top:622.19px;font-size:11px;color:#000;transform:scaleX(0.9788);transform-origin:left 0;">192.168.41.61</div>
<div class="a" style="left:20px;top:639px;width:375px;height:23px;background:#bcbcbc"></div>
<div class="t" style="left:31.80px;top:646.19px;font-size:11px;color:#000;transform:scaleX(0.9251);transform-origin:left 0;">PRN-162 ETH</div>
<div class="t" style="left:198.60px;top:646.19px;font-size:11px;color:#000;transform:scaleX(0.9788);transform-origin:left 0;">192.168.51.63</div>
<div class="a" style="left:20px;top:663px;width:375px;height:23px;background:#c9c9c9"></div>
<div class="t" style="left:31.80px;top:670.19px;font-size:11px;color:#000;transform:scaleX(0.9251);transform-origin:left 0;">PRN-178 ETH</div>
<div class="t" style="left:198.60px;top:670.19px;font-size:11px;color:#000;transform:scaleX(0.9788);transform-origin:left 0;">192.168.31.59</div>
<div class="a" style="left:20px;top:687px;width:375px;height:23px;background:#bcbcbc"></div>
<div class="t" style="left:31.80px;top:694.19px;font-size:11px;color:#000;transform:scaleX(0.9251);transform-origin:left 0;">PRN-187 ETH</div>
<div class="t" style="left:198.60px;top:694.19px;font-size:11px;color:#000;transform:scaleX(0.9788);transform-origin:left 0;">192.168.21.87</div>
<div class="a" style="left:20px;top:711px;width:375px;height:23px;background:#c9c9c9"></div>
<div class="t" style="left:31.80px;top:718.19px;font-size:11px;color:#000;transform:scaleX(0.9251);transform-origin:left 0;">PRN-196 ETH</div>
<div class="t" style="left:198.60px;top:718.19px;font-size:11px;color:#000;transform:scaleX(0.9788);transform-origin:left 0;">192.168.41.62</div>
<div class="a" style="left:20px;top:735px;width:375px;height:26px;background:#f0f0f0"></div>
<div class="a" style="left:20px;top:326px;width:375px;height:1px;background:repeating-linear-gradient(90deg,#000 0 1px,transparent 1px 2px)"></div>
<div class="a" style="left:20px;top:350px;width:375px;height:1px;background:repeating-linear-gradient(90deg,#000 0 1px,transparent 1px 2px)"></div>
<div class="a" style="left:20px;top:374px;width:375px;height:1px;background:repeating-linear-gradient(90deg,#000 0 1px,transparent 1px 2px)"></div>
<div class="a" style="left:20px;top:398px;width:375px;height:1px;background:repeating-linear-gradient(90deg,#000 0 1px,transparent 1px 2px)"></div>
<div class="a" style="left:20px;top:422px;width:375px;height:1px;background:repeating-linear-gradient(90deg,#000 0 1px,transparent 1px 2px)"></div>
<div class="a" style="left:20px;top:446px;width:375px;height:1px;background:repeating-linear-gradient(90deg,#000 0 1px,transparent 1px 2px)"></div>
<div class="a" style="left:20px;top:470px;width:375px;height:1px;background:repeating-linear-gradient(90deg,#000 0 1px,transparent 1px 2px)"></div>
<div class="a" style="left:20px;top:494px;width:375px;height:1px;background:repeating-linear-gradient(90deg,#000 0 1px,transparent 1px 2px)"></div>
<div class="a" style="left:20px;top:518px;width:375px;height:1px;background:repeating-linear-gradient(90deg,#000 0 1px,transparent 1px 2px)"></div>
<div class="a" style="left:20px;top:542px;width:375px;height:1px;background:repeating-linear-gradient(90deg,#000 0 1px,transparent 1px 2px)"></div>
<div class="a" style="left:20px;top:566px;width:375px;height:1px;background:repeating-linear-gradient(90deg,#000 0 1px,transparent 1px 2px)"></div>
<div class="a" style="left:20px;top:590px;width:375px;height:1px;background:repeating-linear-gradient(90deg,#000 0 1px,transparent 1px 2px)"></div>
<div class="a" style="left:20px;top:614px;width:375px;height:1px;background:repeating-linear-gradient(90deg,#000 0 1px,transparent 1px 2px)"></div>
<div class="a" style="left:20px;top:638px;width:375px;height:1px;background:repeating-linear-gradient(90deg,#000 0 1px,transparent 1px 2px)"></div>
<div class="a" style="left:20px;top:662px;width:375px;height:1px;background:repeating-linear-gradient(90deg,#000 0 1px,transparent 1px 2px)"></div>
<div class="a" style="left:20px;top:686px;width:375px;height:1px;background:repeating-linear-gradient(90deg,#000 0 1px,transparent 1px 2px)"></div>
<div class="a" style="left:20px;top:710px;width:375px;height:1px;background:repeating-linear-gradient(90deg,#000 0 1px,transparent 1px 2px)"></div>
<div class="a" style="left:20px;top:734px;width:375px;height:1px;background:repeating-linear-gradient(90deg,#000 0 1px,transparent 1px 2px)"></div>
<div class="a" style="left:20px;top:758px;width:375px;height:1px;background:repeating-linear-gradient(90deg,#000 0 1px,transparent 1px 2px)"></div>
<div class="a" style="left:186px;top:295px;width:1px;height:466px;background:repeating-linear-gradient(180deg,#000 0 1px,transparent 1px 2px)"></div>
<div class="a" style="left:395px;top:735px;width:1px;height:26px;background:repeating-linear-gradient(180deg,#000 0 1px,transparent 1px 2px)"></div>
<div class="a" style="left:18px;top:293px;width:379px;height:443px;border:3px solid #217346"></div>
<div class="a" style="left:28px;top:294px;width:362px;height:2px;background:repeating-linear-gradient(90deg,#fff 0 2px,transparent 2px 9px)"></div>
<div class="a" style="left:394px;top:294px;width:2px;height:435px;background:repeating-linear-gradient(180deg,#fff 0 2px,transparent 2px 9px)"></div>
<div class="a" style="left:20px;top:301px;width:1px;height:425px;background:repeating-linear-gradient(180deg,#fff 0 2px,transparent 2px 9px)"></div>
<div class="a" style="left:26px;top:733px;width:362px;height:2px;background:repeating-linear-gradient(90deg,#fff 0 2px,transparent 2px 9px)"></div>
<div class="a" style="left:20px;top:733px;width:1px;height:2px;background:#fff"></div>
<div class="a" style="left:392px;top:731px;width:1px;height:2px;background:#fff"></div>
<div class="a" style="left:393px;top:732px;width:5px;height:5px;background:#217346"></div>
<div class="a" style="left:395px;top:733px;width:1px;height:2px;background:#fff"></div>
</body></html>
